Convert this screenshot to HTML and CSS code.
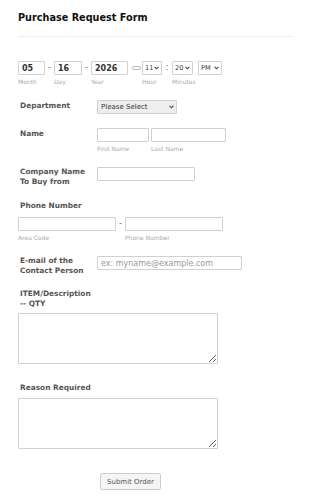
FILE: index.html
```html
<!DOCTYPE html>
<html lang="en">
<head>
    <meta charset="UTF-8">
    <meta name="viewport" content="width=device-width, initial-scale=1.0">
    <title>Purchase Request Form</title>
    <link rel="stylesheet" href="styles.css">
</head>
<body>
    <form class="form">
        <h1 class="form-title">Purchase Request Form</h1>
        <div class="divider"></div>

        <!-- date / time -->
        <div class="date-row">
            <div class="sub">
                <input class="field date-month" type="text" value="05">
                <span class="sub-label">Month</span>
            </div>
            <span class="sep">-</span>
            <div class="sub">
                <input class="field date-day" type="text" value="16">
                <span class="sub-label">Day</span>
            </div>
            <span class="sep">-</span>
            <div class="sub">
                <input class="field date-year" type="text" value="2026">
                <span class="sub-label">Year</span>
            </div>
            <span class="cal-icon"></span>
            <div class="sub">
                <select class="field pick pick-hour"><option>11</option></select>
                <span class="sub-label">Hour</span>
            </div>
            <span class="sep colon">:</span>
            <div class="sub">
                <select class="field pick pick-min"><option>20</option></select>
                <span class="sub-label">Minutes</span>
            </div>
            <div class="sub">
                <select class="field pick pick-ampm"><option>PM</option></select>
            </div>
        </div>

        <div class="row row-dept">
            <label class="label">Department</label>
            <select class="field pick pick-dept"><option>Please Select</option></select>
        </div>

        <div class="row row-name">
            <label class="label">Name</label>
            <div class="sub">
                <input class="field first-name" type="text">
                <span class="sub-label">First Name</span>
            </div>
            <div class="sub">
                <input class="field last-name" type="text">
                <span class="sub-label">Last Name</span>
            </div>
        </div>

        <div class="row row-company">
            <label class="label">Company Name<br>To Buy from</label>
            <input class="field company" type="text">
        </div>

        <div class="block row-phone">
            <label class="label">Phone Number</label>
            <div class="phone-fields">
                <div class="sub">
                    <input class="field phone" type="text">
                    <span class="sub-label">Area Code</span>
                </div>
                <span class="sep">-</span>
                <div class="sub">
                    <input class="field phone" type="text">
                    <span class="sub-label">Phone Number</span>
                </div>
            </div>
        </div>

        <div class="row row-email">
            <label class="label">E-mail of the<br>Contact Person</label>
            <input class="field email" type="text" placeholder="ex: myname@example.com">
        </div>

        <div class="block row-items">
            <label class="label">ITEM/Description<br>-- QTY</label>
            <textarea class="field area"></textarea>
        </div>

        <div class="block row-reason">
            <label class="label">Reason Required</label>
            <textarea class="field area"></textarea>
        </div>

        <div class="actions">
            <button type="button" class="submit">Submit Order</button>
        </div>
    </form>
</body>
</html>
```

FILE: styles.css
```css
body {
    margin: 0;
    background: #fff;
    font-family: "DejaVu Sans", Verdana, sans-serif;
    color: #555;
}
.form {
    padding: 12px 18px 0 18px;
}
.form-title {
    margin: 0;
    font-size: 9.7px;
    font-weight: bold;
    color: #111;
    line-height: 12px;
}
.divider {
    margin-top: 12px;
    width: 274px;
    border-top: 1px solid #eee;
}
.field {
    -webkit-appearance: none;
    appearance: none;
    box-sizing: border-box;
    height: 14px;
    border: 1px solid #d0d0d0;
    border-radius: 1px;
    padding: 0 3px;
    font-family: "DejaVu Sans", Verdana, sans-serif;
    font-size: 7px;
    color: #333;
    background: #fff;
    margin: 0;
    outline: none;
}
.field::placeholder { color: #999; }
.pick {
    padding: 0 6px 0 2px;
    font-size: 6.5px;
    background: #fff url("data:image/svg+xml,%3Csvg xmlns='http://www.w3.org/2000/svg' width='5' height='4'%3E%3Cpath d='M0.6 0.8 L2.5 2.8 L4.4 0.8' fill='none' stroke='%23444' stroke-width='1.1'/%3E%3C/svg%3E") no-repeat right 2px center;
}
.sub {
    display: flex;
    flex-direction: column;
}
.sub-label {
    width: 0;
    white-space: nowrap;
    font-size: 6px;
    color: #aaa;
    margin-top: 3px;
    line-height: 7px;
}
.sep {
    font-size: 8px;
    color: #666;
    width: 9px;
    text-align: center;
    line-height: 14px;
}

.date-row {
    display: flex;
    margin-top: 24px;
}
.date-month { width: 27px; }
.date-day { width: 28px; }
.date-year { width: 37px; }
.date-month, .date-day, .date-year { font-size: 8px; font-weight: bold; }
.cal-icon {
    box-sizing: border-box;
    width: 9px;
    height: 4px;
    margin: 5px 1px 0 4px;
    border: 1px solid #bbb;
    border-radius: 2px;
}
.pick-hour { width: 20px; }
.pick-min { width: 21px; }
.pick-ampm { width: 24px; margin-left: 5px; }
.colon { width: 10px; }

.row {
    display: flex;
    align-items: flex-start;
}
.label {
    box-sizing: border-box;
    width: 79px;
    padding-left: 2px;
    font-size: 7.4px;
    font-weight: bold;
    color: #555;
    line-height: 10px;
}
.row-dept { margin-top: 15px; }
.row-dept .label { padding-top: 1px; }
.pick-dept {
    width: 80px;
    padding-left: 3px;
    font-size: 7px;
    background-color: #eee;
    color: #333;
}
.row-name { margin-top: 14px; }
.row-name .label { padding-top: 1px; }
.first-name { width: 52px; }
.last-name { width: 75px; }
.row-name .sub + .sub { margin-left: 2px; }

.row-company { margin-top: 15px; }
.company { width: 98px; }

.block .label { display: block; width: auto; }
.row-phone { margin-top: 14px; }
.phone-fields { display: flex; margin-top: 6px; }
.phone { width: 98px; }

.row-email { margin-top: 15px; }
.email { width: 145px; font-size: 8px; }

.row-items { margin-top: 13px; }
.row-reason { margin-top: 19px; }
.area {
    display: block;
    width: 200px;
    height: 51px;
    margin-top: 4px;
}
.row-reason .area { margin-top: 5px; }

.actions {
    display: flex;
    margin-top: 24px;
    padding-left: 82px;
}
.submit {
    height: 17px;
    padding: 0 6px;
    border: 1px solid #ccc;
    border-radius: 2px;
    background: #f5f5f5;
    color: #555;
    font-family: "DejaVu Sans", Verdana, sans-serif;
    font-size: 7px;
}
```
